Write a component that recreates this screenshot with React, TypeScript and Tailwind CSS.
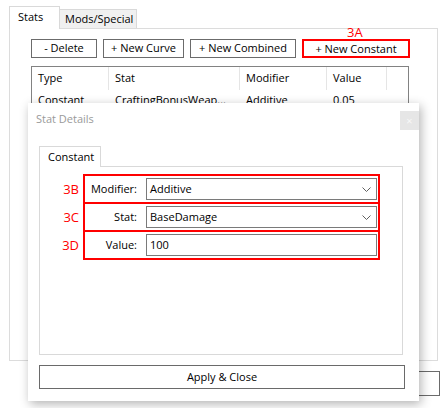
import React from 'react';

const columns = [
  { title: 'Type', width: 'w-[77px]' },
  { title: 'Stat', width: 'w-[131px]' },
  { title: 'Modifier', width: 'w-[87px]' },
  { title: 'Value', width: 'w-[60px]' },
];

const row = ['Constant', 'CraftingBonusWeap...', 'Additive', '0.05'];

function Chevron() {
  return (
    <svg width="9" height="5" viewBox="0 0 9 5" className="text-[#606060]">
      <path d="M0.5 0.5 L4.5 4.5 L8.5 0.5" fill="none" stroke="currentColor" strokeWidth="1" />
    </svg>
  );
}

function FieldRow({
  tag,
  label,
  value,
  combo,
  first,
}: {
  tag: string;
  label: string;
  value: string;
  combo?: boolean;
  first?: boolean;
}) {
  return (
    <div className={`flex items-center ${first ? '' : '-mt-[2px]'}`}>
      <div className="w-[39px] text-right text-[13px] leading-none text-[#ff0000]">{tag}</div>
      <div className="ml-[4px] flex h-[30px] w-[297px] items-center border-2 border-[#ff0000]">
        <div className="w-[52px] text-right">{label}</div>
        <div className="ml-[9px] flex h-[22px] w-[231px] items-center justify-between border border-[#7a7a7a] bg-white pl-[3px] pr-[5px]">
          <span>{value}</span>
          {combo && <Chevron />}
        </div>
      </div>
    </div>
  );
}

export default function App() {
  return (
    <div className="relative h-[408px] w-[446px] overflow-hidden bg-white font-['Open_Sans','Noto_Sans',sans-serif] text-[11px] text-black">
      {/* main window */}
      <div className="pl-[9px] pr-[8px] pt-[6px]">
        {/* tabs */}
        <div className="flex h-[22px] items-end">
          <div className="relative z-10 -mb-px h-[23px] w-[51px] border-l border-r border-t border-[#d9d9d9] bg-white pl-[8px] pt-[2px]">
            Stats
          </div>
          <div className="h-[19px] w-[77px] border-r border-t border-[#d9d9d9] bg-[#f0f0f0] pl-[5px] pt-[1px]">
            Mods/Special
          </div>
        </div>

        {/* tab panel */}
        <div className="h-[333px] border border-[#dcdcdc] pl-[21px] pt-[10px]">
          <div className="flex gap-[6px]">
            <button className="h-[19px] w-[66px] border border-[#6b6b6b] bg-white">- Delete</button>
            <button className="h-[19px] w-[81px] border border-[#6b6b6b] bg-white">+ New Curve</button>
            <button className="h-[19px] w-[106px] border border-[#6b6b6b] bg-white">+ New Combined</button>
            <div className="relative">
              <span className="absolute -top-[13px] left-[45px] text-[13px] leading-none text-[#ff0000]">3A</span>
              <button className="h-[19px] w-[108px] border-2 border-[#ff0000] bg-white">+ New Constant</button>
            </div>
          </div>

          {/* list view */}
          <div className="mt-[8px] h-[250px] w-[378px] border border-[#828282]">
            <div className="flex h-[23px]">
              {columns.map((c) => (
                <div key={c.title} className={`${c.width} flex items-center border-r border-[#e5e5e5] pl-[6px]`}>
                  {c.title}
                </div>
              ))}
            </div>
            <div className="flex h-[20px] items-center">
              {row.map((v, i) => (
                <div key={i} className={`${columns[i].width} pl-[6px]`}>
                  {v}
                </div>
              ))}
            </div>
          </div>
        </div>

        {/* bottom button (behind dialog) */}
        <div className="-mr-[2px] mt-[10px] flex justify-end">
          <button className="h-[25px] w-[110px] border border-[#6b6b6b] bg-white">OK</button>
        </div>
      </div>

      {/* Stat Details dialog */}
      <div className="absolute left-[28px] top-[103px] flex h-[298px] w-[391px] flex-col bg-white shadow-[2px_3px_10px_rgba(0,0,0,0.3)]">
        <div className="mt-[8px] flex h-[19px] items-center justify-between">
          <span className="-mt-[3px] pl-[8px] text-[#9a9a9a]">Stat Details</span>
          <div className="flex h-[19px] w-[19px] items-center justify-center bg-[#e6e6e6] text-[11px] leading-none text-[#f8f8f8]">
            ×
          </div>
        </div>

        <div className="ml-[11px] mt-[16px] flex">
          <div className="relative z-10 -mb-px h-[21px] w-[62px] border-l border-r border-t border-[#d9d9d9] bg-white pl-[8px] pt-[2px]">
            Constant
          </div>
        </div>
        <div className="ml-[11px] h-[189px] w-[364px] border border-[#d9d9d9] pt-[7px]">
          <FieldRow tag="3B" label="Modifier:" value="Additive" combo first />
          <FieldRow tag="3C" label="Stat:" value="BaseDamage" combo />
          <FieldRow tag="3D" label="Value:" value="100" />
        </div>

        <button className="ml-[11px] mt-[10px] h-[24px] w-[366px] border border-[#6a6a6a] bg-white">
          Apply &amp; Close
        </button>
      </div>
    </div>
  );
}
